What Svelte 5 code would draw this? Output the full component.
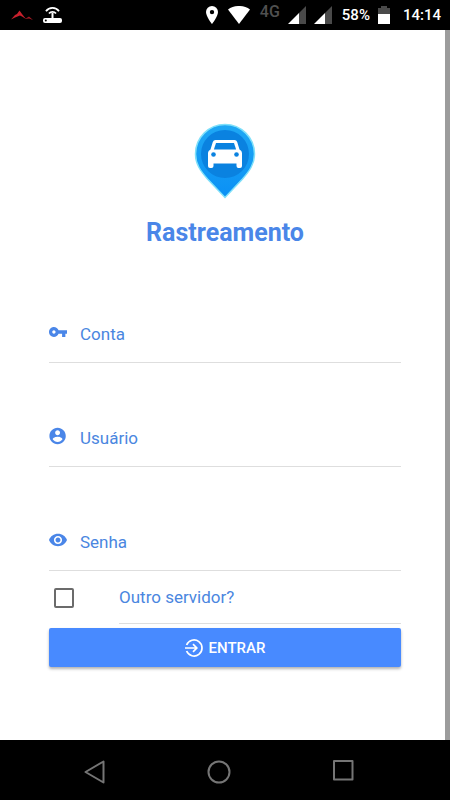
<script>
  let conta = '';
  let usuario = '';
  let senha = '';
  let outroServidor = false;

  function entrar() {
    console.log('entrar', conta, usuario, outroServidor);
  }
</script>

<div class="app">
  <header class="status">
    <div class="status-left">
      <svg width="22" height="12" viewBox="0 0 22 12">
        <path d="M0 10.500L4 6l2-1 2.500-3.500L11 5l4 5-4-2.500L9 6.500 4 8.500z" fill="#c8202c" />
        <path d="M14 10l4-2.500 4 3.500-4-1.500z" fill="#a01822" />
      </svg>
      <svg width="20" height="18" viewBox="0 0 20 18">
        <rect x="0" y="12" width="19" height="5" rx="2" fill="#fff" />
        <circle cx="2.800" cy="14.500" r="1" fill="#000" />
        <path d="M9.500 7v6" stroke="#fff" stroke-width="2" />
        <path d="M3 5.200a8 8 0 0 1 13 0M6 7.500a4.500 4.500 0 0 1 7 0" fill="none" stroke="#fff" stroke-width="1.800" />
      </svg>
    </div>
    <div class="status-right">
      <svg width="12" height="18" viewBox="0 0 12 18">
        <path d="M6 0a6 6 0 0 0-6 6c0 4.500 6 12 6 12s6-7.500 6-12a6 6 0 0 0-6-6zm0 8.300a2.200 2.200 0 1 1 0-4.400 2.200 2.200 0 0 1 0 4.400z" fill="#fff" />
      </svg>
      <svg width="22" height="18" viewBox="0 0 22 18">
        <path d="M0 3.500C6-1.200 16-1.200 22 3.500L11 18z" fill="#fff" />
      </svg>
      <span class="network">4G</span>
      {#each [1, 2] as sim}
        <svg class="signal" width="18" height="18" viewBox="0 0 18 18">
          <path d="M18 0v18H11V7z" fill="#4a4a4a" />
          <path d="M11 7v11H0z" fill="#fff" />
        </svg>
      {/each}
      <span class="percent">58%</span>
      <svg width="12" height="18" viewBox="0 0 12 18">
        <path d="M3 0h6v2h3v6H0V2h3z" fill="#4a4a4a" />
        <path d="M0 8h12v10H0z" fill="#fff" />
      </svg>
      <span class="clock">14:14</span>
    </div>
  </header>

  <main>
    <svg class="logo" width="62" height="76" viewBox="0 0 62 76">
      <defs>
        <linearGradient id="pin" x1="0" y1="0" x2="0" y2="1">
          <stop offset="0" stop-color="#1fa8f4" />
          <stop offset="1" stop-color="#0a90f5" />
        </linearGradient>
      </defs>
      <path d="M31 1.500A29.500 29.500 0 0 0 1.500 31c0 10 5 17 12 25L31 74.500 48.500 56c7-8 12-15 12-25A29.500 29.500 0 0 0 31 1.500z" fill="url(#pin)" stroke="#7fe0fa" stroke-width="1.500" />
      <circle cx="31" cy="31" r="24" fill="#0a82e0" />
      <path d="M21.500 17h19q2 0 2.700 2l2.300 7.500q2.500 1 2.500 3.500v13q0 2-2 2h-1.500q-2 0-2-2v-2.500h-23V43q0 2-2 2H16q-2 0-2-2V30q0-2.500 2.500-3.500L18.800 19q.7-2 2.700-2z" fill="#fff" />
      <path d="M22 20h18l2.100 6.500H19.900z" fill="#0a82e0" />
      <circle cx="19.500" cy="31.500" r="2.300" fill="#0a82e0" />
      <circle cx="42.500" cy="31.500" r="2.300" fill="#0a82e0" />
    </svg>
    <h1>Rastreamento</h1>

    <form on:submit|preventDefault={entrar}>
      <div class="field">
        <label for="conta">
          <svg width="18" height="18" viewBox="1 1 22 22">
            <path d="M12.650 10C11.830 7.670 9.610 6 7 6c-3.310 0-6 2.690-6 6s2.690 6 6 6c2.610 0 4.830-1.670 5.650-4H17v4h4v-4h2v-4H12.650zM7 14c-1.100 0-2-.9-2-2s.9-2 2-2 2 .9 2 2-.9 2-2 2z" />
          </svg>
          Conta
        </label>
        <input id="conta" type="text" bind:value={conta} />
      </div>

      <div class="field">
        <label for="usuario">
          <svg width="18" height="18" viewBox="2 1 21 22">
            <path d="M12 2C6.480 2 2 6.480 2 12s4.480 10 10 10 10-4.480 10-10S17.520 2 12 2zm0 3c1.660 0 3 1.340 3 3s-1.340 3-3 3-3-1.340-3-3 1.340-3 3-3zm0 14.200c-2.500 0-4.710-1.280-6-3.220.03-1.990 4-3.080 6-3.080 1.990 0 5.970 1.090 6 3.080-1.290 1.940-3.500 3.220-6 3.220z" />
          </svg>
          Usuário
        </label>
        <input id="usuario" type="text" bind:value={usuario} />
      </div>

      <div class="field">
        <label for="senha">
          <svg width="18" height="18" viewBox="1 1 22 22">
            <path d="M12 4.500C7 4.500 2.730 7.610 1 12c1.730 4.390 6 7.500 11 7.500s9.270-3.110 11-7.500c-1.730-4.390-6-7.500-11-7.500zM12 17c-2.760 0-5-2.240-5-5s2.240-5 5-5 5 2.240 5 5-2.240 5-5 5zm0-8c-1.660 0-3 1.340-3 3s1.340 3 3 3 3-1.340 3-3-1.340-3-3-3z" />
          </svg>
          Senha
        </label>
        <input id="senha" type="password" bind:value={senha} />
      </div>

      <div class="check">
        <input id="servidor" type="checkbox" bind:checked={outroServidor} />
        <label for="servidor">Outro servidor?</label>
      </div>

      <button type="submit">
        <svg width="18" height="18" viewBox="0 0 18 18" fill="none" stroke="#fff" stroke-width="1.700">
          <path d="M1.600 6A8 8 0 1 1 1.600 12" />
          <path d="M0 9h11.500M8 5.200L11.800 9 8 12.800" />
        </svg>
        ENTRAR
      </button>
    </form>
  </main>

  <nav>
    <button type="button" aria-label="Voltar">
      <svg width="24" height="24" viewBox="0 0 24 24"><path d="M20.500 1.500v21L2.500 12z" /></svg>
    </button>
    <button type="button" aria-label="Início">
      <svg width="24" height="24" viewBox="0 0 24 24"><circle cx="12" cy="12" r="10.500" /></svg>
    </button>
    <button type="button" aria-label="Recentes">
      <svg width="24" height="24" viewBox="0 0 24 24"><rect x="3" y="1" width="18.500" height="18.500" /></svg>
    </button>
  </nav>
</div>

<style>
  :global(body) {
    background: #fff;
  }

  .app {
    display: flex;
    flex-direction: column;
    min-height: 100vh;
    font-family: Roboto, "Liberation Sans", sans-serif;
  }

  .status {
    display: flex;
    justify-content: space-between;
    align-items: center;
    height: 30px;
    padding: 0 9px 0 11px;
    background: #000;
    color: #fff;
    font-size: 15px;
    font-weight: 500;
  }

  .status-left,
  .status-right {
    display: flex;
    align-items: center;
    gap: 10px;
  }

  .network {
    align-self: flex-start;
    font-size: 16px;
    line-height: 12px;
    color: #505050;
  }

  .signal {
    margin-left: -2px;
  }

  .percent {
    margin-right: -2px;
  }

  .clock {
    margin-left: 3px;
  }

  main {
    flex: 1;
    padding: 93px 44px 40px 49px;
    border-right: 5px solid #9c9c9c;
    text-align: center;
  }

  .logo {
    display: block;
    margin: 0 auto;
  }

  h1 {
    margin: 18px 0 11px;
    font-size: 25px;
    line-height: 32px;
    font-weight: 700;
    color: #4a86e8;
  }

  .field {
    display: flex;
    align-items: flex-start;
    padding: 63px 0 16px;
    border-bottom: 1px solid #dedede;
  }

  .field:first-child {
    padding-top: 62px;
  }

  label {
    font-size: 17px;
    line-height: 24px;
    color: #4a86e0;
    text-align: left;
  }

  .field label {
    display: flex;
    align-items: flex-start;
    gap: 13px;
  }

  label svg {
    margin-top: 1px;
    fill: #4a86e8;
  }

  .field input {
    flex: 1;
    min-width: 0;
    height: 24px;
    margin-left: 12px;
    padding: 0;
    border: 0;
    outline: 0;
    background: transparent;
    font: inherit;
    font-size: 17px;
  }

  .check {
    display: flex;
    align-items: center;
  }

  .check input {
    appearance: none;
    width: 20px;
    height: 20px;
    margin: 0 45px 0 5px;
    border: 2px solid #6b6b6b;
    border-radius: 2px;
  }

  .check input:checked {
    background: #488aff;
  }

  .check label {
    flex: 1;
    padding: 14px 0;
    border-bottom: 1px solid #dedede;
  }

  form button {
    display: flex;
    align-items: center;
    justify-content: center;
    gap: 6px;
    width: 100%;
    height: 39px;
    margin-top: 4px;
    border: 0;
    border-radius: 2px;
    background: #488aff;
    box-shadow: 0 2px 3px rgba(0, 0, 0, 0.3);
    color: #fff;
    font-family: inherit;
    font-size: 15px;
    font-weight: 500;
  }

  nav {
    display: flex;
    justify-content: center;
    gap: 100px;
    height: 60px;
    padding-right: 12px;
    background: #000;
  }

  nav button {
    display: flex;
    align-items: center;
    padding: 4px 0 0;
    border: 0;
    background: none;
  }

  nav svg {
    fill: none;
    stroke: #757575;
    stroke-width: 2;
    stroke-linejoin: round;
  }
</style>
